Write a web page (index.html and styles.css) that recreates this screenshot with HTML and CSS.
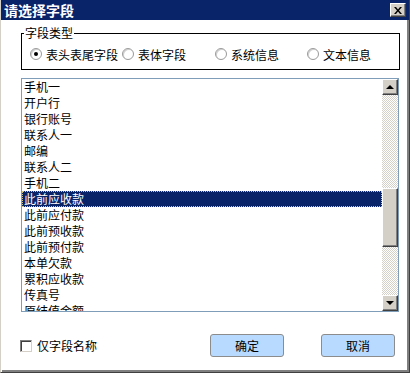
FILE: index.html
```html
<!DOCTYPE html>
<html lang="zh">
<head>
  <meta charset="UTF-8" />
  <title>请选择字段</title>
  <link rel="stylesheet" href="styles.css">
</head>
<body>
  <div class="window">
    <div class="titlebar">
      <span class="title">请选择字段</span>
      <button class="close-btn">
        <svg width="8" height="7" viewBox="0 0 8 7"><path d="M0 0h2l2 2.5L6 0h2L5 3.5 8 7H6L4 4.5 2 7H0l3-3.5z" fill="#000"/></svg>
      </button>
    </div>

    <fieldset class="group">
      <legend>字段类型</legend>
      <div class="radio-row">
        <label class="radio"><span class="dot checked"></span>表头表尾字段</label>
        <label class="radio"><span class="dot"></span>表体字段</label>
        <label class="radio"><span class="dot"></span>系统信息</label>
        <label class="radio"><span class="dot"></span>文本信息</label>
      </div>
    </fieldset>

    <div class="listbox">
      <ul class="items">
        <li>手机一</li>
        <li>开户行</li>
        <li>银行账号</li>
        <li>联系人一</li>
        <li>邮编</li>
        <li>联系人二</li>
        <li>手机二</li>
        <li class="selected">此前应收款</li>
        <li>此前应付款</li>
        <li>此前预收款</li>
        <li>此前预付款</li>
        <li>本单欠款</li>
        <li>累积应收款</li>
        <li>传真号</li>
        <li>原结值金额</li>
      </ul>
      <div class="scrollbar">
        <div class="sb-btn"><span class="arrow up"></span></div>
        <div class="sb-track">
          <div class="sb-space"></div>
          <div class="sb-thumb"></div>
        </div>
        <div class="sb-btn"><span class="arrow down"></span></div>
      </div>
    </div>

    <div class="footer">
      <label class="check"><span class="box"></span>仅字段名称</label>
      <button class="btn ok">确定</button>
      <button class="btn cancel">取消</button>
    </div>
  </div>
</body>
</html>
```

FILE: styles.css
```css
body {
  margin: 0;
  font-family: 'Noto Sans CJK SC', 'DejaVu Sans', sans-serif;
  font-size: 12px;
  color: #000;
}

.window {
  width: 410px;
  height: 373px;
  box-sizing: border-box;
  background: #fff;
  border-left: 1px solid #d4d0c8;
  border-right: 1px solid #404040;
  border-bottom: 1px solid #404040;
  box-shadow: inset 1px 0 0 #fff, inset -2px 0 0 #808080, inset 0 -2px 0 #808080;
  overflow: hidden;
}

.titlebar {
  height: 20px;
  margin-left: -1px;
  background: #0a246a;
  display: flex;
  align-items: center;
  justify-content: space-between;
  padding: 0 3px 0 4px;
}

.title {
  color: #fff;
  font-weight: bold;
  font-size: 14px;
  line-height: 20px;
}

.close-btn {
  width: 16px;
  height: 14px;
  padding: 0;
  background: #d4d0c8;
  border: 1px solid;
  border-color: #fff #404040 #404040 #fff;
  box-shadow: inset -1px -1px 0 #808080;
  display: flex;
  align-items: center;
  justify-content: center;
}

.group {
  margin: 6px 9px 0 20px;
  padding: 2px 8px 6px 8px;
  border: 1px solid #000;
  height: 34px;
}

.group legend {
  padding: 0 1px;
  margin-left: -6px;
  line-height: 14px;
}

.radio-row {
  display: grid;
  grid-template-columns: 92px 93px 92px auto;
  align-items: center;
  height: 24px;
}

.radio {
  display: flex;
  align-items: center;
  gap: 4px;
  white-space: nowrap;
}

.dot {
  width: 10px;
  height: 10px;
  border-radius: 50%;
  border: 1px solid #9a9a9a;
  background: #fff;
  display: flex;
  align-items: center;
  justify-content: center;
  box-shadow: inset 1px 1px 0 #d0d0d0;
}

.dot.checked::after {
  content: '';
  width: 4px;
  height: 4px;
  border-radius: 50%;
  background: #000;
}

.listbox {
  margin: 8px 10px 0 20px;
  height: 232px;
  border: 1px solid #7f9db9;
  display: flex;
}

.items {
  list-style: none;
  margin: 0;
  padding: 0;
  flex: 1;
  overflow: hidden;
}

.items li {
  height: 16px;
  line-height: 16px;
  padding-left: 2px;
  white-space: nowrap;
}

.items li.selected {
  background: #0a246a;
  color: #fff;
  outline: 1px dotted #d8c878;
  outline-offset: -1px;
}

.scrollbar {
  width: 16px;
  display: flex;
  flex-direction: column;
}

.sb-btn,
.sb-thumb {
  box-sizing: border-box;
  background: #d4d0c8;
  border: 1px solid;
  border-color: #fff #404040 #404040 #fff;
  box-shadow: inset -1px -1px 0 #808080;
}

.sb-btn {
  height: 16px;
  display: flex;
  align-items: center;
  justify-content: center;
}

.arrow {
  width: 0;
  height: 0;
  border-left: 4px solid transparent;
  border-right: 4px solid transparent;
}

.arrow.up {
  border-bottom: 4px solid #000;
}

.arrow.down {
  border-top: 4px solid #000;
}

.sb-track {
  flex: 1;
  background-color: #fff;
  background-image: repeating-conic-gradient(#d4d0c8 0 25%, #fff 0 50%);
  background-size: 2px 2px;
}

.sb-space {
  height: 93px;
}

.sb-thumb {
  height: 59px;
}

.footer {
  display: flex;
  align-items: center;
  height: 23px;
  margin-top: 22px;
  padding-left: 19px;
}

.check {
  display: flex;
  align-items: center;
  gap: 5px;
  width: 190px;
}

.box {
  width: 10px;
  height: 10px;
  border: 1px solid;
  border-color: #808080 #d4d0c8 #d4d0c8 #808080;
  box-shadow: inset 1px 1px 0 #404040;
  background: #fff;
}

.btn {
  width: 74px;
  height: 23px;
  padding: 0;
  font-family: inherit;
  font-size: 12px;
  background: #b9daff;
  border: 1px solid #8c8c8c;
  border-radius: 3px;
}

.btn.cancel {
  margin-left: 37px;
}
```
